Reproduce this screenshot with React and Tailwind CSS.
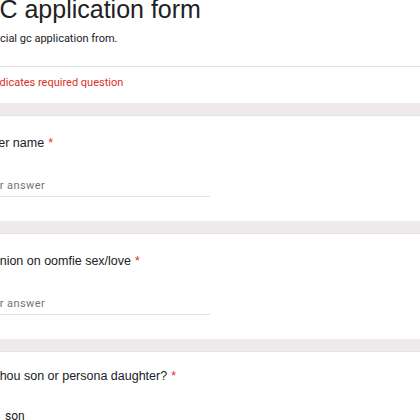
import React from 'react';

function Asterisk() {
  return <span className="text-[#d93025] ml-1">*</span>;
}

function TextQuestion({ title }) {
  return (
    <div className="bg-white pl-6 pt-[17px] pb-[24px] border-t border-[#e6e1e1]">
      <div className="text-[12.5px] leading-5 text-[#202124] font-['Liberation_Sans',Arial,sans-serif]">
        {title}
        <Asterisk />
      </div>
      <div className="mt-[25px] w-[227px] border-b border-[#e3e3e3] pb-[2px] text-[11px] leading-4 tracking-[0.4px] text-[#70757a] font-['Roboto',sans-serif]">
        <span className="-ml-[3px]">Your answer</span>
      </div>
    </div>
  );
}

export default function App() {
  return (
    <div className="w-[420px] h-[420px] overflow-hidden bg-[#eee9ea]">
      <div className="-ml-[41px] w-[480px] flex flex-col gap-[12px]">
        <div className="bg-white pb-[12px]">
          <div className="pl-6 pb-[19px] border-b border-[#e2e2e2]">
            <h1 className="-mt-[5px] -ml-[3px] text-[25px] leading-[28px] text-[#202124] font-['Liberation_Sans',Arial,sans-serif]">
              GC application form
            </h1>
            <p className="mt-[8px] text-[11px] leading-4 text-[#202124] font-['Roboto',sans-serif]">
              Official gc application from.
            </p>
          </div>
          <p className="pl-6 pt-[8px] text-[11px] leading-4 text-[#d93025] font-['Roboto',sans-serif]">
            * Indicates required question
          </p>
        </div>

        <TextQuestion title="User name" />
        <TextQuestion title="opinion on oomfie sex/love" />

        <div className="bg-white pl-6 pt-[14px] pb-[30px] border-t border-[#e6e1e1]">
          <div className="text-[12.5px] leading-5 text-[#202124] font-['Liberation_Sans',Arial,sans-serif]">
            Is thou son or persona daughter?
            <Asterisk />
          </div>
          <div className="mt-[22px] flex items-center gap-[6px]">
            <span className="w-4 h-4 rounded-full border-2 border-[#5f6368]"></span>
            <span className="text-[12px] leading-4 text-[#202124] font-['Roboto',sans-serif]">son</span>
          </div>
        </div>
      </div>
    </div>
  );
}
